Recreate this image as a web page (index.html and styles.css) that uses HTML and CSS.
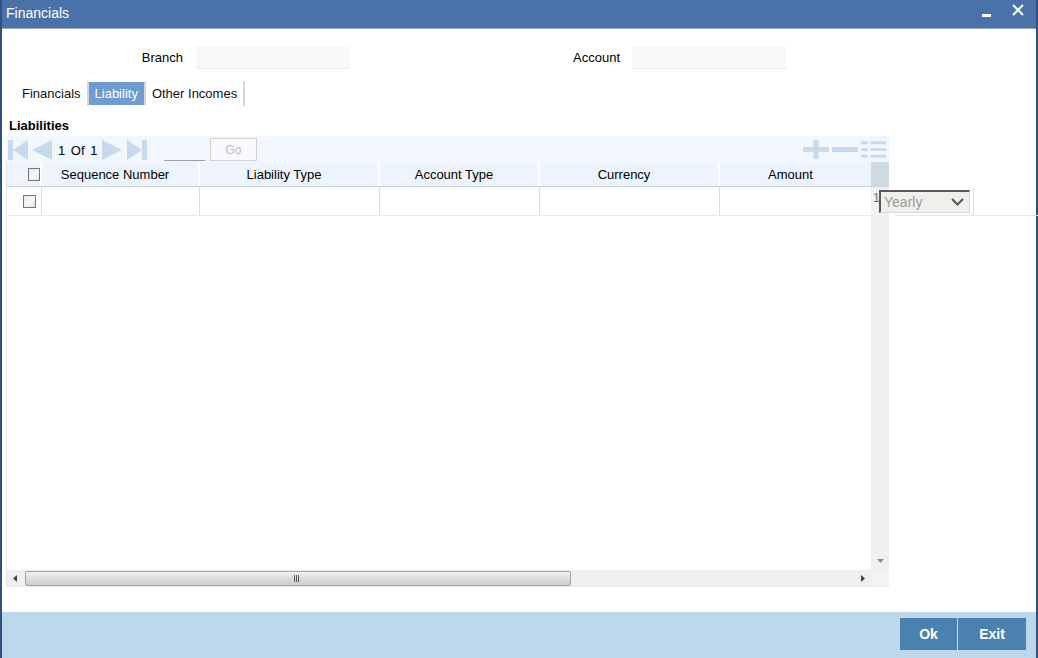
FILE: index.html
```html
<!DOCTYPE html>
<html>
<head>
<meta charset="utf-8">
<title>Financials</title>
<link rel="stylesheet" href="styles.css">
</head>
<body>
<div class="window">
  <div class="titlebar">
    <span class="title">Financials</span>
    <div class="win-ctrls">
      <span class="min-btn"></span>
      <svg class="close-btn" width="12" height="12" viewBox="0 0 12 12"><path d="M1 1 L11 11 M11 1 L1 11" stroke="#fff" stroke-width="2" fill="none"/></svg>
    </div>
  </div>

  <div class="main">
    <div class="form-row">
      <label class="lbl lbl-branch">Branch</label>
      <div class="inp inp-branch"></div>
      <label class="lbl lbl-account">Account</label>
      <div class="inp inp-account"></div>
    </div>

    <div class="tabs">
      <div class="tab">Financials</div>
      <div class="tab active">Liability</div>
      <div class="tab">Other Incomes</div>
    </div>

    <div class="section-title">Liabilities</div>

    <div class="grid">
      <div class="toolbar">
        <svg class="pg pg-first" width="20" height="20" viewBox="0 0 20 20"><rect x="0" y="0" width="5" height="20" fill="#c6d9ef"/><polygon points="5,10 20,0 20,20" fill="#c6d9ef"/></svg>
        <svg class="pg pg-prev" width="20" height="20" viewBox="0 0 20 20"><polygon points="0,10 20,0 20,20" fill="#c6d9ef"/></svg>
        <span class="pg-text">1 Of 1</span>
        <svg class="pg pg-next" width="20" height="20" viewBox="0 0 20 20"><polygon points="20,10 0,0 0,20" fill="#c6d9ef"/></svg>
        <svg class="pg pg-last" width="20" height="20" viewBox="0 0 20 20"><polygon points="15,10 0,0 0,20" fill="#c6d9ef"/><rect x="15" y="0" width="5" height="20" fill="#c6d9ef"/></svg>
        <span class="pg-input"></span>
        <span class="go-btn">Go</span>
        <div class="tb-actions">
          <svg width="26" height="19" viewBox="0 0 26 19"><rect x="0" y="7" width="26" height="5" fill="#c6d9ef"/><rect x="10.5" y="0" width="5" height="19" fill="#c6d9ef"/></svg>
          <svg width="26" height="19" viewBox="0 0 26 19"><rect x="0" y="7" width="26" height="5" fill="#c6d9ef"/></svg>
          <svg width="26" height="19" viewBox="0 0 26 19"><rect x="0" y="1" width="7" height="3" fill="#c6d9ef"/><rect x="10" y="1" width="16" height="3" fill="#c6d9ef"/><rect x="0" y="8" width="7" height="3" fill="#c6d9ef"/><rect x="10" y="8" width="16" height="3" fill="#c6d9ef"/><rect x="0" y="15" width="7" height="3" fill="#c6d9ef"/><rect x="10" y="15" width="16" height="3" fill="#c6d9ef"/></svg>
        </div>
      </div>

      <div class="grid-body">
        <div class="table-area">
          <div class="thead">
            <div class="cell c-chk"><span class="chk chk-head"></span></div>
            <div class="cell c-seq">Sequence Number</div>
            <div class="cell c-liab">Liability Type</div>
            <div class="cell c-acct">Account Type</div>
            <div class="cell c-cur">Currency</div>
            <div class="cell c-amt">Amount</div>
          </div>
          <div class="trow">
            <div class="cell c-chk"><span class="chk chk-row"></span></div>
            <div class="cell c-seq"></div>
            <div class="cell c-liab"></div>
            <div class="cell c-acct"></div>
            <div class="cell c-cur"></div>
            <div class="cell c-amt"></div>
          </div>
        </div>
        <div class="vscroll">
          <div class="vs-head"></div>
          <div class="vs-track">
            <svg class="vs-down" width="7" height="4" viewBox="0 0 7 4"><polygon points="0,0 7,0 3.5,4" fill="#8a8a8a"/></svg>
          </div>
        </div>
        <div class="row-ext">
          <span class="ext-digit">1</span>
          <div class="select-box">
            <span class="select-text">Yearly</span>
            <svg class="select-chev" width="13" height="8" viewBox="0 0 13 8"><path d="M1 1 L6.5 6.5 L12 1" stroke="#555" stroke-width="2" fill="none"/></svg>
          </div>
          <span class="ext-line"></span>
        </div>
      </div>

      <div class="hscroll">
        <div class="hs-main">
          <svg class="hs-left" width="4" height="7" viewBox="0 0 4 7"><polygon points="0,3.5 4,0 4,7" fill="#444"/></svg>
          <div class="hs-thumb"><span class="grip"></span></div>
          <div class="hs-rest"></div>
          <svg class="hs-right" width="4" height="7" viewBox="0 0 4 7"><polygon points="4,3.5 0,0 0,7" fill="#444"/></svg>
        </div>
        <div class="hs-corner"></div>
      </div>
    </div>
  </div>

  <div class="footer">
    <button class="btn">Ok</button>
    <button class="btn">Exit</button>
  </div>
</div>
</body>
</html>
```

FILE: styles.css
```css
* { box-sizing: border-box; }

html, body {
  margin: 0;
  padding: 0;
  width: 1038px;
  height: 658px;
  overflow: hidden;
  background: #ffffff;
  font-family: "Liberation Sans", Arial, sans-serif;
  font-size: 13px;
  color: #000;
}

.window {
  width: 1038px;
  height: 658px;
  border-left: 2px solid #2d5185;
  border-right: 2px solid #2d5185;
  display: flex;
  flex-direction: column;
}

.titlebar {
  height: 29px;
  background: #4a72a8;
  border-bottom: 1px solid #8fa6bd;
  display: flex;
  align-items: center;
  justify-content: space-between;
  padding: 0 0 2px 4px;
}

.title {
  color: #fff;
  font-size: 14px;
}

.win-ctrls {
  display: flex;
  align-items: center;
  padding-right: 12px;
}

.min-btn {
  display: block;
  width: 9px;
  height: 3px;
  background: #fff;
  margin-top: 5px;
  margin-right: 21px;
}

.close-btn {
  display: block;
  margin-top: -6px;
}

.main {
  flex: 1;
  display: flex;
  flex-direction: column;
}

.form-row {
  display: flex;
  align-items: center;
  margin-top: 17px;
  height: 23px;
}

.lbl {
  text-align: right;
}

.lbl-branch { width: 181px; }
.lbl-account { width: 270px; }

.inp {
  height: 23px;
  background: #f9f9f9;
  border-bottom: 1px solid #ececec;
}

.inp-branch { width: 154px; margin-left: 13px; }
.inp-account { width: 155px; margin-left: 12px; }

.tabs {
  display: flex;
  margin-top: 12px;
  margin-left: 14px;
  height: 25px;
}

.tab {
  height: 25px;
  line-height: 25px;
  padding: 0 6px;
  border-right: 2px solid #d6d6d6;
  color: #111;
}

.tab.active {
  background: #6f9bd1;
  color: #fff;
  border-top: 1px solid #fff;
  border-bottom: 1px solid #fff;
  line-height: 23px;
}

.section-title {
  margin-top: 10px;
  margin-left: 7px;
  line-height: 19px;
  font-weight: bold;
}

.grid {
  margin-top: 1px;
  margin-left: 4px;
  width: 883px;
  display: flex;
  flex-direction: column;
}

.toolbar {
  height: 26px;
  background: #f2f7fd;
  display: flex;
  align-items: flex-start;
}

.pg { display: block; margin-top: 4px; }
.pg-first { margin-left: 2px; }
.pg-prev { margin-left: 4px; }
.pg-next { margin-left: 6px; }
.pg-last { margin-left: 5px; }

.pg-text {
  margin-left: 6px;
  width: 38px;
  line-height: 26px;
  padding-top: 2px;
  white-space: nowrap;
  word-spacing: 2px;
}

.pg-input {
  display: block;
  margin-left: 17px;
  width: 41px;
  height: 25px;
  border-bottom: 1px solid #a0a0a0;
}

.go-btn {
  display: block;
  margin-left: 5px;
  margin-top: 2px;
  width: 47px;
  height: 23px;
  border: 1px solid #d4d4d4;
  background: #f7f9fc;
  color: #bdbdbd;
  font-size: 12px;
  line-height: 23px;
  text-align: center;
}

.tb-actions {
  margin-left: auto;
  margin-right: 3px;
  margin-top: 4px;
  display: flex;
  gap: 2px;
}

.tb-actions svg { display: block; }
.tb-actions svg:first-child { margin-right: 1px; }
.tb-actions svg:last-child { margin-left: 1px; width: 25px; }

.grid-body {
  position: relative;
  height: 408px;
  display: flex;
}

.table-area {
  width: 865px;
  border-left: 1px solid #e6e6e6;
  background: #fff;
}

.thead {
  display: flex;
  height: 25px;
  background: #edf4fd;
  border-bottom: 1px solid #c8d5e3;
}

.trow {
  display: flex;
  height: 29px;
  border-bottom: 1px solid #f0e9e1;
}

.cell {
  display: flex;
  align-items: center;
  justify-content: center;
  padding-right: 10px;
  white-space: nowrap;
}

.thead .cell { border-right: 2px solid #ffffff; }
.thead .c-amt { border-right: none; }
.trow .cell { border-right: 1px solid #d4dde7; }
.trow .c-amt { border-right: none; }

.c-chk { width: 35px; justify-content: flex-start; padding-right: 0; }
.c-seq { width: 158px; }
.c-liab { width: 180px; }
.c-acct { width: 160px; }
.c-cur { width: 180px; }
.c-amt { width: 151px; }

.chk {
  display: block;
  width: 13px;
  height: 13px;
  border: 1px solid #767676;
  background: linear-gradient(135deg, #e8e8e8, #f8f8f8 60%, #dcdcdc);
}

.chk-head { margin-left: 21px; }
.chk-row { margin-left: 16px; }

.vscroll {
  width: 18px;
  display: flex;
  flex-direction: column;
}

.vs-head {
  height: 25px;
  background: #cddbe0;
}

.vs-track {
  flex: 1;
  background: #f0f0f0;
  position: relative;
}

.vs-down {
  position: absolute;
  left: 6px;
  bottom: 7px;
}

.row-ext {
  position: absolute;
  left: 865px;
  top: 25px;
  width: 167px;
  height: 29px;
  display: flex;
  align-items: center;
}

.row-ext::after {
  content: "";
  position: absolute;
  left: 24px;
  right: 0;
  bottom: 0;
  height: 1px;
  background: #f0e9e1;
}

.ext-digit {
  display: block;
  width: 9px;
  overflow: hidden;
  text-align: right;
  color: #777;
  font-size: 13px;
  padding-bottom: 8px;
  margin-left: 0;
}

.select-box {
  margin-left: -1px;
  width: 91px;
  height: 23px;
  background: #f0efeb;
  border-top: 2px solid #5a5a5a;
  border-left: 2px solid #5a5a5a;
  border-right: 1px solid #d8d8d8;
  border-bottom: 1px solid #d8d8d8;
  display: flex;
  align-items: center;
  justify-content: space-between;
  padding: 0 5px 0 3px;
  position: relative;
}

.select-text {
  color: #9a9a9a;
  font-size: 14px;
}

.select-chev { display: block; }

.ext-line {
  display: block;
  width: 1px;
  height: 29px;
  background: #d4dde7;
  margin-left: 3px;
}

.hscroll {
  height: 17px;
  display: flex;
  border-bottom: 1px solid #ececec;
}

.hs-main {
  width: 865px;
  background: #efefef;
  display: flex;
  align-items: center;
  border-left: 1px solid #e6e6e6;
}

.hs-left { display: block; margin-left: 6px; }
.hs-right { display: block; margin-right: 6px; }

.hs-thumb {
  margin-left: 8px;
  width: 546px;
  height: 15px;
  border: 1px solid #a3a3a3;
  border-radius: 2px;
  background: linear-gradient(#f3f3f3, #dadada 55%, #cfcfcf);
  display: flex;
  align-items: center;
  justify-content: center;
}

.grip {
  display: block;
  width: 6px;
  height: 7px;
  background: repeating-linear-gradient(90deg, #555 0 1px, transparent 1px 2px);
  margin-left: -2px;
}

.hs-rest { flex: 1; }

.hs-corner {
  width: 18px;
  background: #f3f3f3;
}

.footer {
  height: 46px;
  background: #bdd8ea;
  display: flex;
  justify-content: flex-end;
  align-items: flex-start;
  padding: 6px 10px 0 0;
  gap: 1px;
}

.btn {
  height: 32px;
  border: none;
  background: #4a81ae;
  color: #fff;
  font-family: "Liberation Sans", Arial, sans-serif;
  font-size: 14px;
  font-weight: bold;
  padding: 0;
  margin: 0;
}

.btn:first-child { width: 57px; }
.btn:last-child { width: 68px; }
```
